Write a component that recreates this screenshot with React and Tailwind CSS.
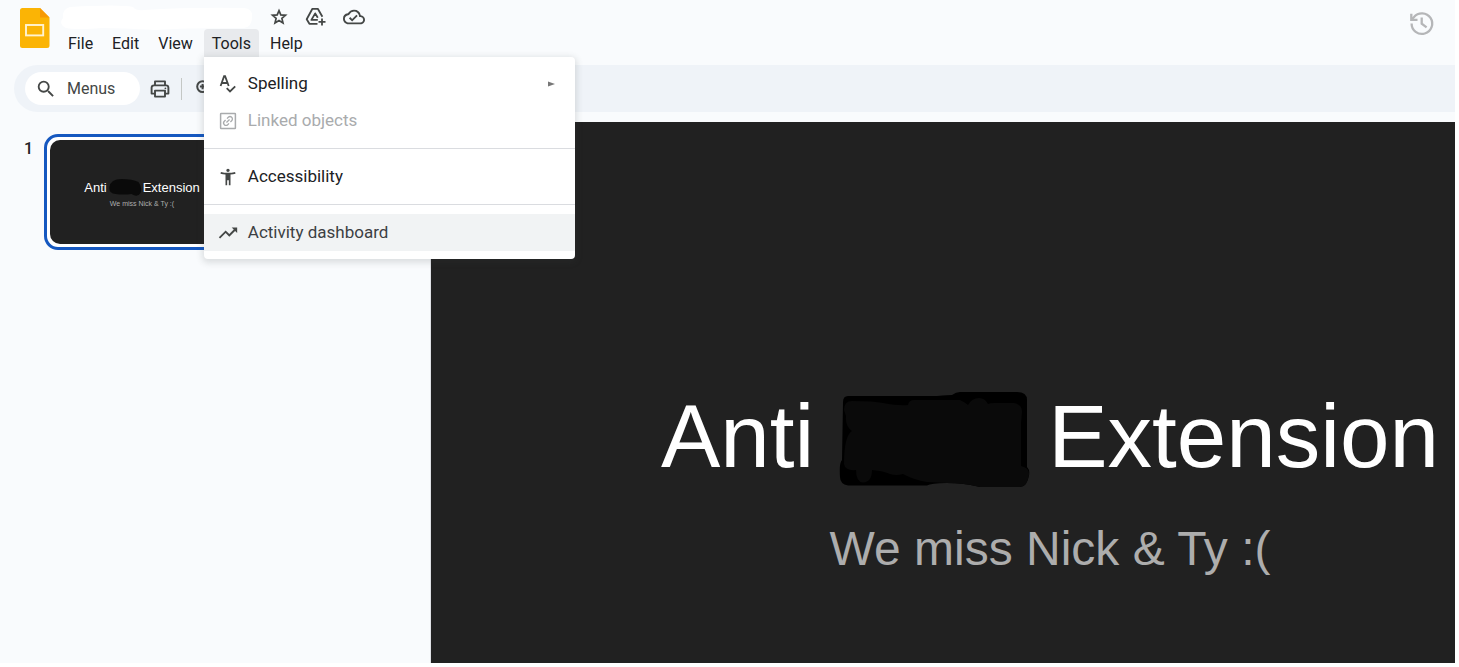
import { MdOutlineCloudDone, MdSearch, MdAccessibilityNew, MdTrendingUp } from "react-icons/md";

function SlidesLogo() {
  return (
    <svg viewBox="0 0 30 40" className="h-10 w-[30px]" aria-hidden="true">
      <path d="M2.5 0H20L29.5 9.5V37.5a2.5 2.5 0 0 1-2.5 2.5H2.5A2.5 2.5 0 0 1 0 37.5V2.5A2.5 2.5 0 0 1 2.5 0Z" fill="#fbb405" />
      <path d="M20 0 29.5 9.5H20Z" fill="#f79a05" />
      <rect x="6" y="17" width="17.2" height="10.4" fill="none" stroke="#fff3d0" strokeWidth="1.9" />
    </svg>
  );
}

function StarIcon() {
  return (
    <svg viewBox="0 0 20 20" className="h-5 w-5" fill="none" stroke="currentColor" strokeWidth="1.7" aria-hidden="true">
      <path d="M10 3.6 11.8 7.900 16.500 8.300 12.900 11.400 14 16 10 13.500 6 16 7.100 11.400 3.500 8.300 8.200 7.900Z" />
    </svg>
  );
}

function HistoryIcon() {
  return (
    <svg viewBox="0 0 27 27" className="h-[27px] w-[27px]" fill="none" stroke="currentColor" strokeWidth="2.300" aria-hidden="true">
      <path d="M3.600 13.500A10.300 10.300 0 1 0 6 7L3.600 9.600" />
      <path d="M3.300 3.800V9.900H9.500" />
      <path d="M13.700 7.400V13.600L18.600 17.400" />
    </svg>
  );
}

function ZoomIcon() {
  return (
    <svg viewBox="0 0 22 22" className="h-[22px] w-[22px]" fill="none" stroke="currentColor" strokeWidth="2" aria-hidden="true">
      <circle cx="8.600" cy="8.600" r="5.400" />
      <path d="M12.600 12.600 18.600 18.600M8.600 5.900V11.300M5.900 8.600H11.300" />
    </svg>
  );
}

function AddToDriveIcon() {
  return (
    <svg viewBox="0 0 22 20" className="h-5 w-[22px]" fill="none" stroke="currentColor" strokeWidth="1.8" strokeLinejoin="round" aria-hidden="true">
      <path d="M12.5 16.8H4.4L1.7 12.2 7.4 1.8h5.4l4.6 8" />
      <path d="M12.8 12.9H6.4L10.2 6.4l2.6 4.4" />
      <path d="M17 11.4v7M13.5 14.9h7" />
    </svg>
  );
}

function PrintIcon() {
  return (
    <svg viewBox="0 0 22 22" className="h-[22px] w-[22px]" fill="none" stroke="currentColor" strokeWidth="1.9" strokeLinejoin="round" aria-hidden="true">
      <path d="M6 7.4V3.4h10v4M6 15.6H2.6v-5.8a2.4 2.4 0 0 1 2.4-2.4h12a2.4 2.4 0 0 1 2.4 2.4v5.8H16" />
      <path d="M6 12.6h10v6H6Z" />
      <circle cx="16.4" cy="10.3" r="0.9" fill="currentColor" stroke="none" />
    </svg>
  );
}

function SpellingIcon() {
  return (
    <svg viewBox="0 0 20 20" className="h-5 w-5" fill="none" stroke="#444746" strokeWidth="1.8" aria-hidden="true">
      <path d="M2.600 12 6.100 2.200h1l3.600 9.800M3.900 9h5.600" />
      <path d="M8.700 14.200l3.300 3.300 5.200-5.200" />
    </svg>
  );
}

function LinkedObjectsIcon() {
  return (
    <svg viewBox="0 0 20 20" className="h-5 w-5" fill="none" stroke="currentColor" strokeWidth="1.5" aria-hidden="true">
      <rect x="2.6" y="2.6" width="14.8" height="14.8" rx="0.5" />
      <g transform="rotate(-45 10 10)" strokeWidth="1.3">
        <path d="M9 7.600H7.200a2.400 2.400 0 0 0 0 4.800H9M11 7.600h1.800a2.400 2.400 0 0 1 0 4.800H11M7.800 10h4.400" />
      </g>
    </svg>
  );
}

function TitleScribble() {
  return (
    <svg viewBox="0 0 234 104" className="h-[104px] w-[234px]" aria-hidden="true">
      <path d="M29 18Q29 12 34 12H123Q135 11 138 11 142 8 146 8H203Q213 8 213 16V83Q216 86 215 91 213 103 206 103H166Q150 99 133 99 117 99 113 101.500H34Q26 100 26 93 25 79 28 76Z" fill="#000" />
      <path d="M30 26Q30 17 38 17 60 17 69 19 85 22 94 21 95 16 100 16H146Q152 19 154 21 158 14 165 14 171 14 174 20 176 19 180 19H200Q208 20 208 28L207 39V82Q216 84 215 91 213 103 206 103H166Q150 99 133 99L113 98Q100 96 89 90 82 92 76 90 70 87 58 86 58 98 49 98.500 42 98 42 86 31 87 30 80 30 52 38 47 31 42 32 32Z" fill="#0a0a0a" />
    </svg>
  );
}

function MenuRow({ icon, label, disabled, active, submenu }) {
  return (
    <button
      type="button"
      role="menuitem"
      disabled={disabled}
      className={`flex h-[37px] w-full items-center gap-[10px] pl-[14px] pr-5 text-left text-[17px] ${disabled ? "text-[#a9abad]" : active ? "bg-[#f1f3f4] text-[#3c4043]" : "text-[#202124]"}`}
    >
      <span className="flex w-5 justify-center">{icon}</span>
      <span className="flex-1">{label}</span>
      {submenu && (
        <svg viewBox="0 0 7 6" className="h-[6px] w-[7px]" aria-hidden="true">
          <path d="M0 0.5 7 3 0 5.5Z" fill="#777" />
        </svg>
      )}
    </button>
  );
}

function ToolsMenu() {
  return (
    <div role="menu" aria-label="Tools" className="absolute left-0 top-full z-20 w-[371px] rounded-b rounded-tr bg-white py-2 shadow-[0_2px_6px_2px_rgba(60,64,67,0.15)]">
      <MenuRow icon={<SpellingIcon />} label="Spelling" submenu />
      <MenuRow icon={<LinkedObjectsIcon />} label="Linked objects" disabled />
      <hr className="my-[9px] border-[#dadce0]" />
      <MenuRow icon={<MdAccessibilityNew size={20} color="#444746" />} label="Accessibility" />
      <hr className="my-[9px] border-[#dadce0]" />
      <MenuRow icon={<MdTrendingUp size={22} color="#444746" className="shrink-0" />} label="Activity dashboard" active />
    </div>
  );
}

const menuButton = "h-7 rounded-t px-2 pt-[2px] text-base leading-6 text-[#202124]";

export default function App() {
  return (
    <div className="flex min-h-screen flex-col bg-white pb-1 pr-1 font-['Roboto',sans-serif]">
      <div className="flex flex-1 flex-col overflow-hidden bg-[#f9fbfd]">
        <header className="flex h-[65px] items-start pl-5 pr-5">
          <a href="#home" aria-label="Slides home" className="mt-2">
            <SlidesLogo />
          </a>
          <div className="ml-[10px] flex-1">
            <div className="flex h-[29px] items-center gap-4 pt-[5px] text-[#444746]">
              <svg viewBox="0 0 193 26" className="h-[26px] w-[193px]" aria-hidden="true">
                <path d="M3 14Q2 5 10 3Q60 0 73 3Q76 7 84 6Q130 3 184 4Q193 5 192 13Q192 23 184 24Q120 24 96 26Q60 24 42 24Q16 26 6 24Q-2 20 3 14Z" fill="#fff" />
              </svg>
              <div className="flex items-center gap-4">
                <button type="button" aria-label="Star"><StarIcon /></button>
                <button type="button" aria-label="Add shortcut to Drive"><AddToDriveIcon /></button>
                <button type="button" aria-label="Document status"><MdOutlineCloudDone size={22} /></button>
              </div>
            </div>
            <nav className="flex gap-[3px]">
              <button type="button" className={menuButton}>File</button>
              <button type="button" className={menuButton}>Edit</button>
              <button type="button" className={menuButton}>View</button>
              <div className="relative">
                <button type="button" aria-expanded="true" className={`${menuButton} bg-[#e8eaed]`}>Tools</button>
                <ToolsMenu />
              </div>
              <button type="button" className={menuButton}>Help</button>
            </nav>
          </div>
          <button type="button" aria-label="Version history" className="mt-[10px] text-[#b5b6b8]">
            <HistoryIcon />
          </button>
        </header>

        <div className="ml-[14px] flex h-[47px] items-center rounded-l-full bg-[#eff3f8] pl-[11px] text-[#444746]">
          <button type="button" className="flex h-[33px] w-[115px] items-center gap-[10px] rounded-full bg-white pl-[10px] text-base">
            <MdSearch size={22} />
            Menus
          </button>
          <button type="button" aria-label="Print" className="ml-[9px]"><PrintIcon /></button>
          <div className="ml-[10px] h-[22px] w-px bg-[#c4c7c5]" />
          <button type="button" aria-label="Zoom" className="ml-3"><ZoomIcon /></button>
        </div>

        <main className="mt-[10px] flex flex-1">
          <aside className="flex w-[431px] shrink-0 items-start border-r border-[#dfe1e5] pl-6 pt-3">
            <span className="mt-[3px] w-5 text-base font-medium text-[#202124]">1</span>
            <button type="button" aria-label="Slide 1" className="rounded-[14px] border-[3px] border-[#1558c0] bg-white p-[3px]">
              <span className="flex h-[104px] w-[184px] flex-col items-center rounded-[10px] bg-[#212121] pt-[39px] font-['Liberation_Sans',Arial,sans-serif] whitespace-nowrap">
                <span className="flex items-center text-[13px] leading-[18px] text-white">
                  Anti
                  <svg viewBox="0 0 35 18" className="h-[18px] w-9" aria-hidden="true">
                    <path d="M2 8Q3 0 14 0Q25 0 31 3Q35 8 33 14Q30 19 24 15Q16 16 8 15Q1 14 2 8Z" fill="#0a0a0a" />
                  </svg>
                  Extension
                </span>
                <span className="mt-[3px] text-[7px] leading-2 text-[#adadad]">We miss Nick &amp; Ty :(</span>
              </span>
            </button>
          </aside>

          <section aria-label="Slide" className="flex flex-1 flex-col items-center bg-[#212121] pl-[214px] pt-[262px] font-['Liberation_Sans',Arial,sans-serif] whitespace-nowrap">
            <h1 className="flex items-center text-[89px] leading-[104px] text-white">
              Anti
              <TitleScribble />
              Extension
            </h1>
            <p className="mt-[33px] text-5xl leading-[56px] text-[#adadad]">We miss Nick &amp; Ty :(</p>
          </section>
        </main>
      </div>
    </div>
  );
}
